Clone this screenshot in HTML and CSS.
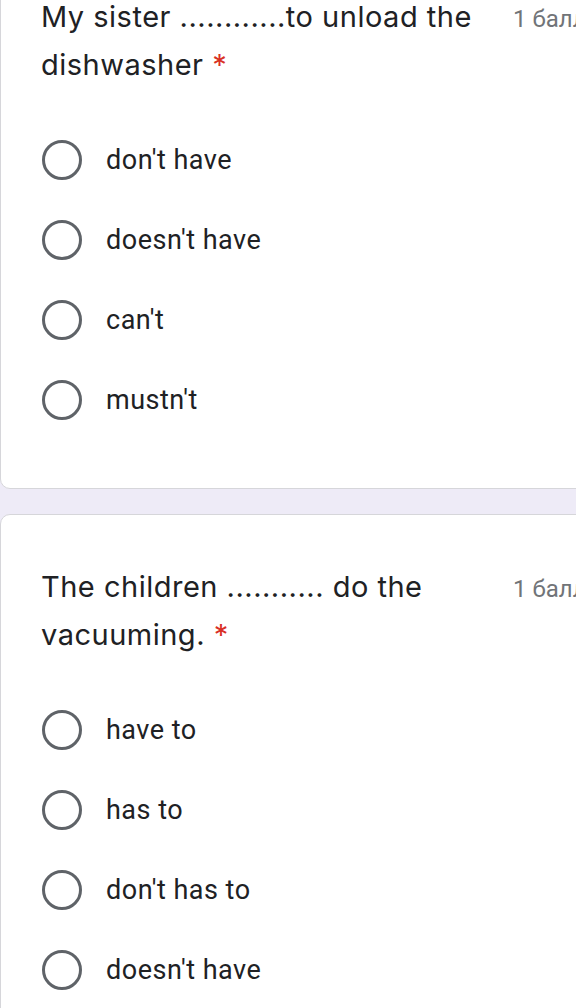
FILE: index.html
```html
<!DOCTYPE html>
<html lang="ru">
<head>
<meta charset="utf-8">
<link rel="stylesheet" href="styles.css">
</head>
<body>
<div class="page">
  <section class="card first">
    <div class="q-head">
      <div class="q-title">My sister ............to unload the dishwasher <span class="req">*</span></div>
      <div class="q-points">1 балл</div>
    </div>
    <ul class="options">
      <li class="opt"><span class="radio"></span><span class="label">don't have</span></li>
      <li class="opt"><span class="radio"></span><span class="label">doesn't have</span></li>
      <li class="opt"><span class="radio"></span><span class="label">can't</span></li>
      <li class="opt"><span class="radio"></span><span class="label">mustn't</span></li>
    </ul>
  </section>
  <section class="card">
    <div class="q-head">
      <div class="q-title">The children ........... do the vacuuming. <span class="req">*</span></div>
      <div class="q-points">1 балл</div>
    </div>
    <ul class="options">
      <li class="opt"><span class="radio"></span><span class="label">have to</span></li>
      <li class="opt"><span class="radio"></span><span class="label">has to</span></li>
      <li class="opt"><span class="radio"></span><span class="label">don't has to</span></li>
      <li class="opt"><span class="radio"></span><span class="label">doesn't have</span></li>
    </ul>
  </section>
</div>
</body>
</html>
```
FILE: styles.css
```css
html, body {
  margin: 0;
  padding: 0;
}
body {
  background: #eeebf7;
  width: 576px;
  height: 1008px;
  overflow: hidden;
  font-family: Roboto, "Noto Sans", sans-serif;
  color: #202124;
}
.page {
  width: 640px;
  display: flex;
  flex-direction: column;
  gap: 25px;
  margin-top: -56px;
}
.card {
  background: #fff;
  border: 1px solid #d6d6da;
  border-radius: 10px;
  padding: 48px 0 48px 40px;
}
.q-head {
  display: flex;
  align-items: flex-start;
}
.q-title {
  width: 445px;
  font-family: Inter, "Open Sans", sans-serif;
  font-size: 29px;
  line-height: 48px;
  letter-spacing: 0.5px;
  color: #202124;
}
.req {
  color: #d93025;
}
.q-points {
  margin-left: 27px;
  font-size: 24px;
  line-height: 52px;
  color: #717478;
  white-space: nowrap;
}
.options {
  list-style: none;
  margin: 31px 0 0;
  padding: 0 0 0 1px;
}
.opt {
  height: 80px;
  display: flex;
  align-items: center;
}
.radio {
  box-sizing: border-box;
  width: 40px;
  height: 40px;
  border: 3.4px solid #5f6368;
  border-radius: 50%;
  flex: none;
}
.label {
  margin-left: 24px;
  font-size: 27px;
  color: #202124;
  letter-spacing: 0.5px;
}
```
